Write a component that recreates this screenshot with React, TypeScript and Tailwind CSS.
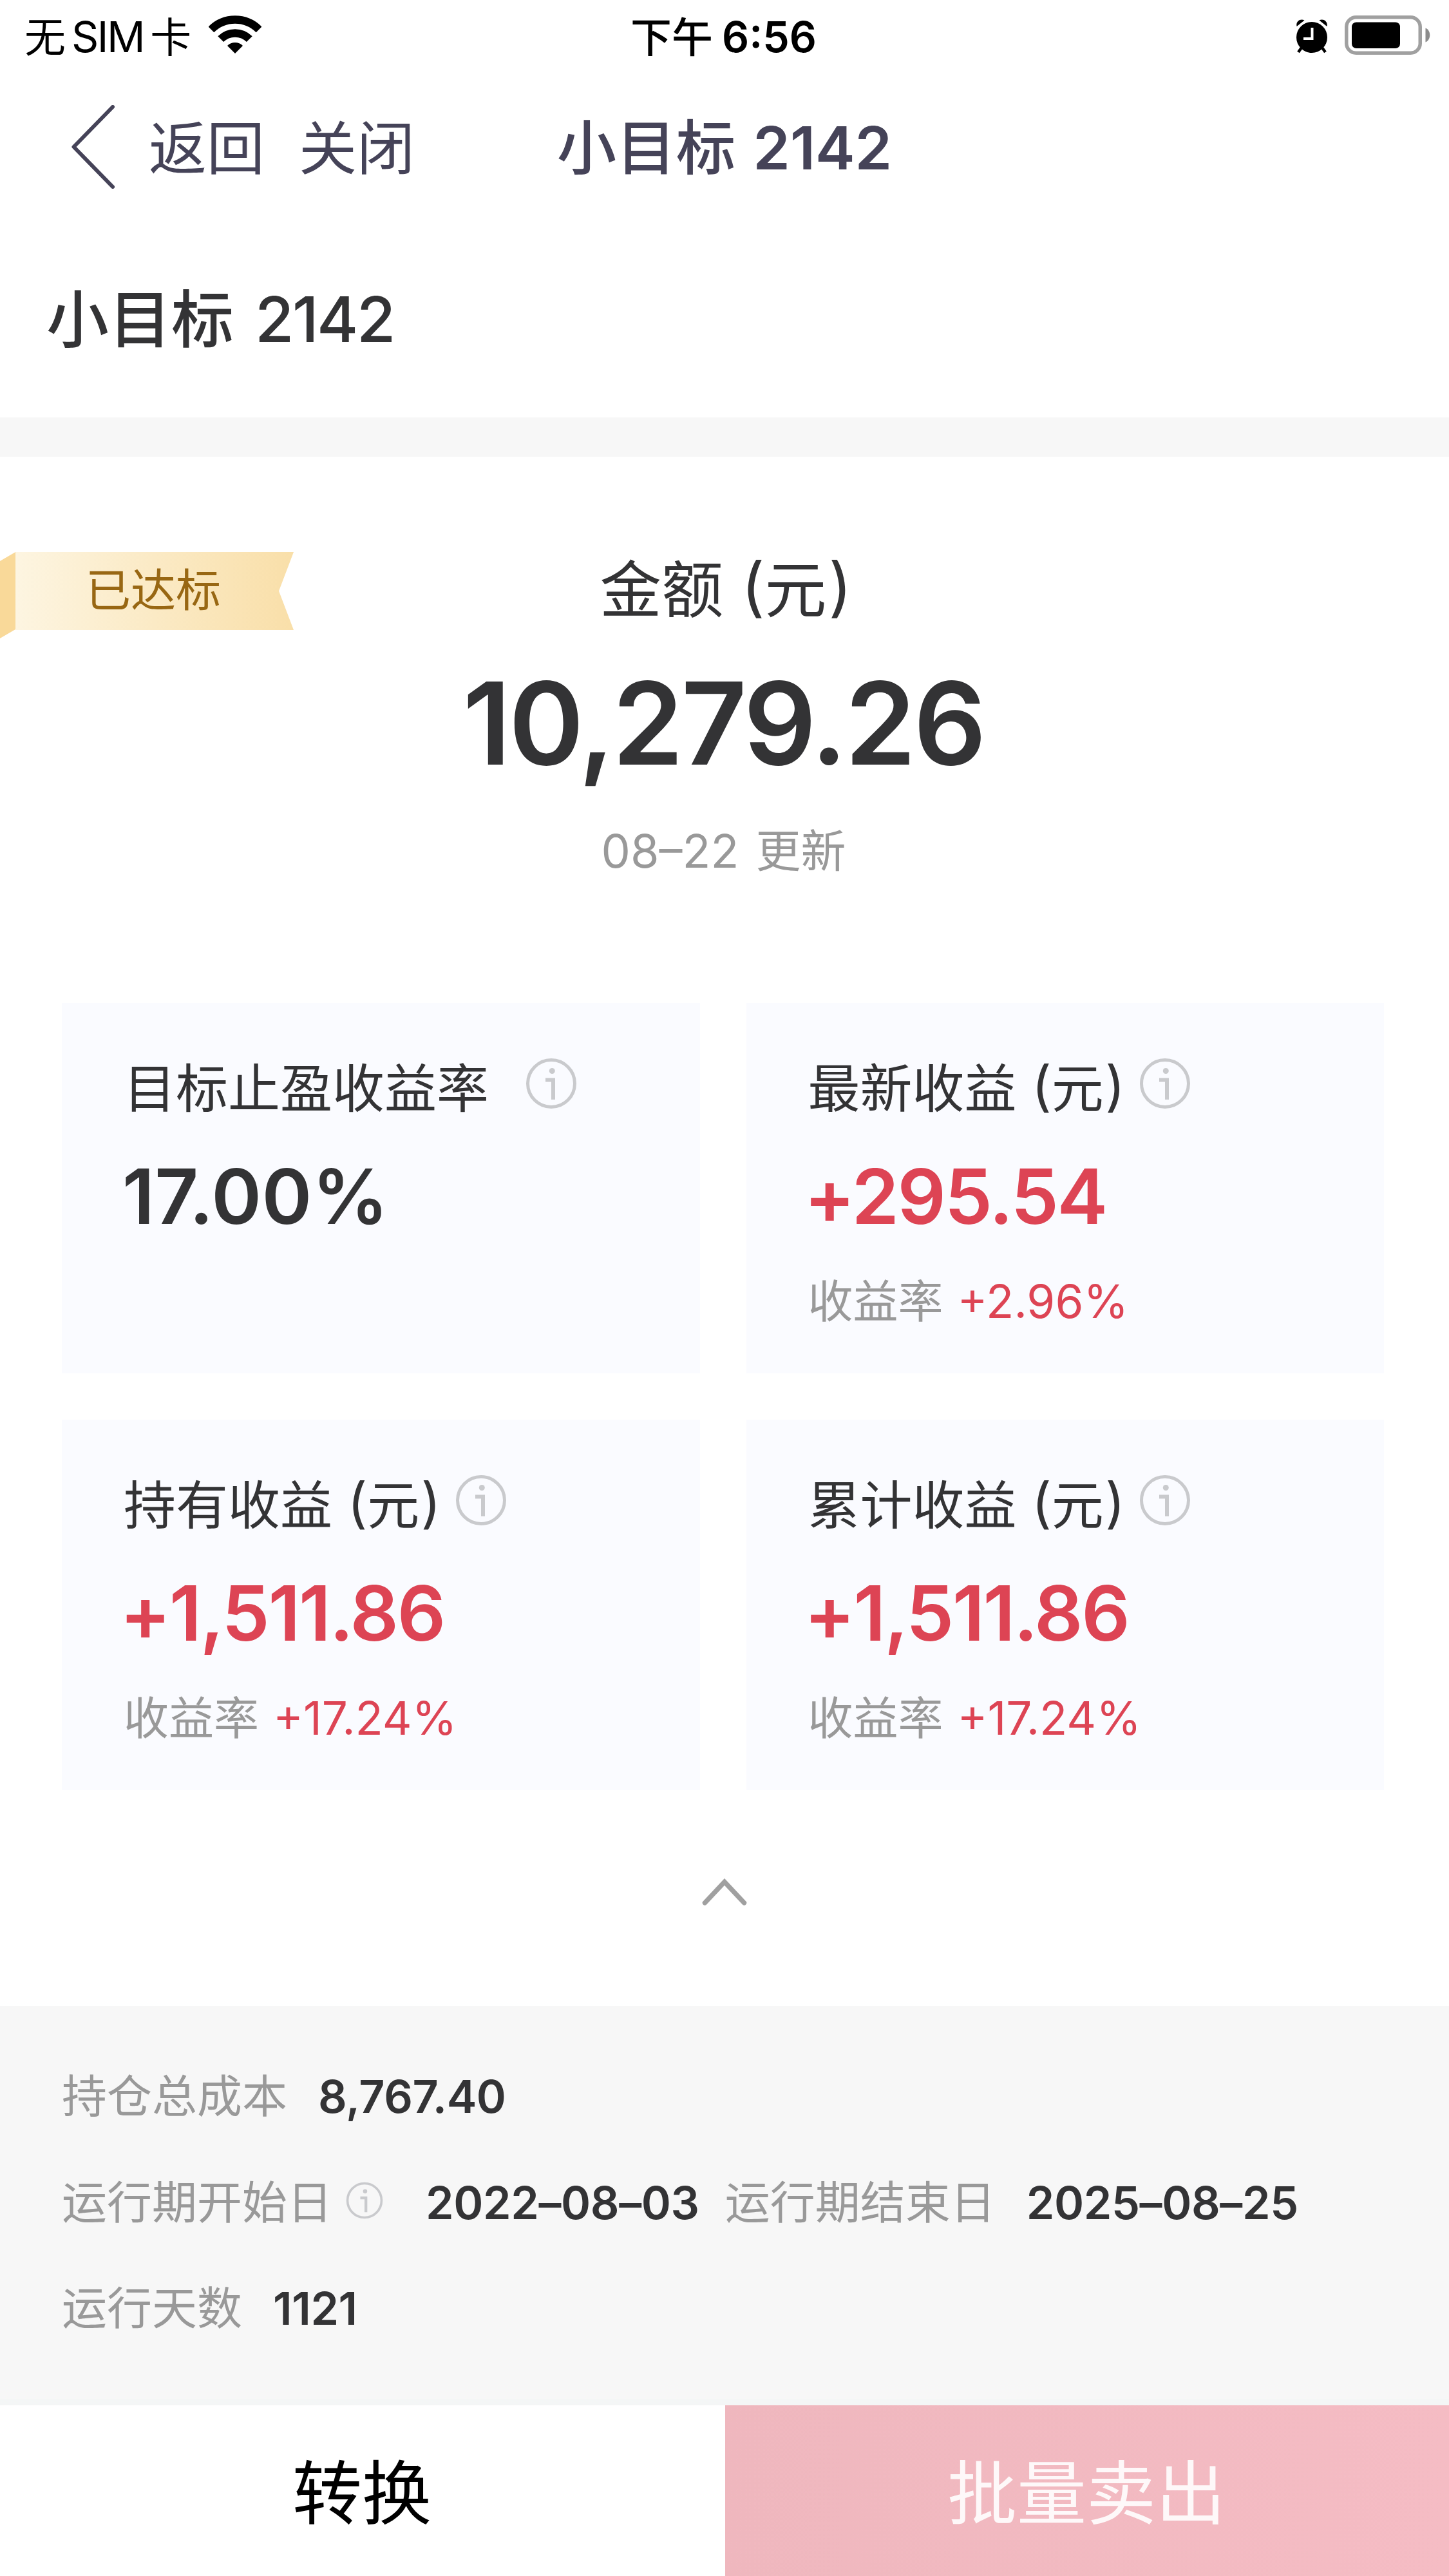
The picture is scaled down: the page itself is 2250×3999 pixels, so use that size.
import { clsx } from 'clsx';

interface Metric {
  label: string;
  unit?: boolean;
  value: string;
  rate?: string;
}

const METRICS: Metric[] = [
  { label: '目标止盈收益率', value: '17.00%' },
  { label: '最新收益', unit: true, value: '+295.54', rate: '+2.96%' },
  { label: '持有收益', unit: true, value: '+1,511.86', rate: '+17.24%' },
  { label: '累计收益', unit: true, value: '+1,511.86', rate: '+17.24%' },
];

function WifiIcon() {
  return (
    <svg className="mb-[7px] ml-[27px] h-[60px] w-[82px]" viewBox="0 0 82 60" fill="none">
      <path d="M3.9 21.9a52.5 52.5 0 0 1 74.2 0M18.7 36.7a31.5 31.5 0 0 1 44.6 0" stroke="#000" strokeWidth="12.5" />
      <path d="M41 59 29 47a17 17 0 0 1 24 0Z" fill="#000" />
    </svg>
  );
}

function AlarmIcon() {
  return (
    <svg className="mb-[3px] h-[54px] w-[50px]" viewBox="0 0 50 54" fill="none">
      <path d="M1.6 12C-.4 4.5 7-1 13.5 2.5ZM48.4 12C50.4 4.5 43-1 36.5 2.5Z" fill="#000" />
      <path d="m9 45-5 7M41 45l5 7" stroke="#000" strokeWidth="4.5" />
      <circle cx="25" cy="29" r="24" fill="#000" />
      <path d="M25.5 14v17H12" stroke="#fff" strokeWidth="4" />
    </svg>
  );
}

function BatteryIcon() {
  return (
    <svg className="mb-[5px] h-[61px] w-[134px]" viewBox="0 0 134 61" fill="none">
      <rect x="2.75" y="2.75" width="114.5" height="55.5" rx="15" stroke="#a0a0a0" strokeWidth="5.5" />
      <rect x="11" y="10.5" width="75" height="40.5" rx="7" fill="#000" />
      <path d="M125.5 19.5c9 3.5 9 18.5 0 22Z" fill="#8c8c8c" />
    </svg>
  );
}

function InfoIcon({ className }: { className?: string }) {
  return (
    <svg className={clsx('shrink-0', className)} viewBox="0 0 80 80" fill="none">
      <circle cx="40" cy="40" r="36.5" stroke="#c9cacd" strokeWidth="5" />
      <circle cx="41.3" cy="20.5" r="4.5" fill="#c9cacd" />
      <path d="M31 34.5H43V65" stroke="#c9cacd" strokeWidth="6" />
    </svg>
  );
}

function Unit() {
  return (
    <span className="ml-[0.29em]">
      <span className="align-[0.04em] text-[1.04em] leading-none">(</span>元
      <span className="ml-[0.03em] align-[0.04em] text-[1.04em] leading-none">)</span>
    </span>
  );
}

function StatusBar() {
  return (
    <div className="grid h-[114px] grid-cols-3 items-center text-[64px] leading-[80px] text-black">
      <div className="flex items-center pl-[38px]">
        <span>
          无<span className="mr-2.5 ml-[9px] text-[66px] tracking-[-2.5px]">SIM</span>卡
        </span>
        <WifiIcon />
      </div>
      <div className="pr-[3px] text-center font-medium">
        下午<span className="ml-3.5 text-[66px] font-semibold">6:56</span>
      </div>
      <div className="flex items-center justify-end gap-[26px] pr-[28px]">
        <AlarmIcon />
        <BatteryIcon />
      </div>
    </div>
  );
}

function NavBar() {
  return (
    <div className="grid h-[234px] grid-cols-[1fr_auto_1fr] items-center text-[90px] leading-[120px] text-[#454358]">
      <div className="flex items-center pl-[110px]">
        <svg className="mb-1.5 h-[130px] w-[68px]" viewBox="0 0 68 130" fill="none">
          <path d="M65 3 4.5 65 65 127" stroke="#454358" strokeWidth="6" strokeLinecap="round" strokeLinejoin="round" />
        </svg>
        <span className="ml-[53px]">返回</span>
        <span className="ml-[53px]">关闭</span>
      </div>
      <div className="mb-[5px] text-[92.5px] font-medium">
        小目标<span className="ml-[27px] font-semibold">2142</span>
      </div>
    </div>
  );
}

function Ribbon() {
  return (
    <div className="absolute top-[148px] left-0 h-[134px] w-[456px]">
      <svg className="absolute inset-0" viewBox="0 0 456 134" fill="none">
        <defs>
          <linearGradient id="ribbon" x1="0" y1="0" x2="1" y2="0">
            <stop offset="0" stopColor="#fdf5e1" />
            <stop offset="1" stopColor="#f9dfa9" />
          </linearGradient>
        </defs>
        <path d="M0 14 24 0V120L0 134Z" fill="#f9d999" />
        <path d="M24 0H456L433 60.5 456 121H24Z" fill="url(#ribbon)" />
      </svg>
      <div className="relative pl-[133px] text-left text-[70px] leading-[119px] text-[#986713]">已达标</div>
    </div>
  );
}

function MetricCard({ label, unit, value, rate }: Metric) {
  const gain = value.startsWith('+');

  return (
    <div className="h-[575px] bg-[#fafbff] pt-[83px] pl-24">
      <div className="flex h-[100px] items-center text-[81px] leading-[100px]">
        <span>
          {label}
          {unit && <Unit />}
        </span>
        <InfoIcon className={clsx('mb-[17px] size-20', unit ? 'ml-[22px]' : 'ml-[57px]')} />
      </div>
      <div
        className={clsx(
          'mt-[52px] text-[118px] leading-[130px] font-[560]',
          gain ? '-ml-1.5 tracking-[-2.4px] text-[#dd4454]' : '-ml-0.5 tracking-[0.3px]',
        )}
      >
        {value}
      </div>
      {rate && (
        <div className="mt-[53px] text-[71px] leading-[90px] text-[#999]">
          <span className="text-[70px]">收益率</span>
          <span className="ml-[22px] text-[#dd4454]">{rate}</span>
        </div>
      )}
    </div>
  );
}

function Field({ label, value, info }: { label: string; value: string; info?: boolean }) {
  return (
    <div className="flex items-center">
      <span className="text-[#999]">{label}</span>
      {info && <InfoIcon className="mr-[18px] mb-2 ml-[21px] size-[58px]" />}
      <span className="ml-12 font-[570] tracking-[-0.4px]">{value}</span>
    </div>
  );
}

export default function App() {
  return (
    <div className="flex h-[3999px] w-[2250px] flex-col overflow-hidden bg-white font-['Inter','Noto_Sans_CJK_SC',sans-serif] whitespace-nowrap text-[#333335]">
      <StatusBar />
      <NavBar />

      <div className="flex h-[300px] items-center pb-[5px] pl-[72px] text-[97px] leading-[120px] font-medium">
        <h1>
          小目标<span className="ml-[33px] text-[98px] tracking-[-2.5px]">2142</span>
        </h1>
      </div>
      <div className="h-[61px] bg-[#f7f7f7]" />

      <div className="relative h-[848px] pt-[146px] text-center">
        <Ribbon />
        <div className="pl-1 text-[96px] leading-[120px]">
          金额
          <Unit />
        </div>
        <div className="mt-[58px] pr-[3px] text-[177px] leading-[180px] font-[570] tracking-[-3.6px]">10,279.26</div>
        <div className="mt-[58px] pr-[3px] text-[72px] leading-[100px] text-[#999]">
          08–22<span className="ml-[26px] text-[70px]">更新</span>
        </div>
      </div>

      <div className="grid grid-cols-2 gap-[72px] pr-[101px] pl-24">
        {METRICS.map((m) => (
          <MetricCard key={m.label} {...m} />
        ))}
      </div>

      <div className="flex h-[335px] items-center justify-center pb-[19px]">
        <svg className="h-[44px] w-[72px]" viewBox="0 0 72 44" fill="none">
          <path d="M5.5 39 36 6.5 66.5 39" stroke="#a0a0a0" strokeWidth="7.5" strokeLinecap="round" />
        </svg>
      </div>

      <div className="h-[620px] border-b-[10px] border-[#f4f6f6] bg-[#f7f7f7] pt-[59px] pl-24 text-[70px] leading-[164.5px]">
        <Field label="持仓总成本" value="8,767.40" />
        <div className="flex gap-10">
          <Field label="运行期开始日" value="2022–08–03" info />
          <Field label="运行期结束日" value="2025–08–25" />
        </div>
        <Field label="运行天数" value="1121" />
      </div>

      <div className="flex h-[265px] text-[108px] leading-[140px]">
        <button type="button" className="w-[1124px] bg-white pt-2 text-black">
          转换
        </button>
        <button type="button" className="ml-0.5 flex-1 bg-linear-to-r from-[#efb7be] to-[#f5bcc4] pt-2 pr-0.5 text-white/90">
          批量卖出
        </button>
      </div>
    </div>
  );
}
